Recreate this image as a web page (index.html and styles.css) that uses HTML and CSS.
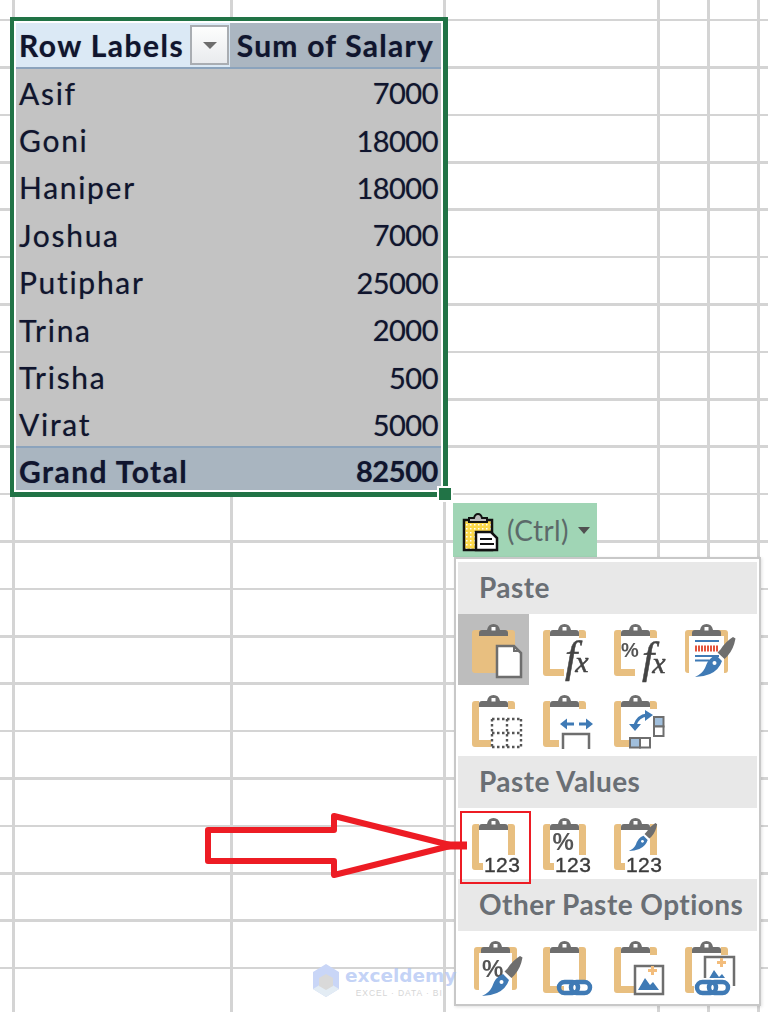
FILE: index.html
```html
<!DOCTYPE html>
<html lang="en">
<head>
<meta charset="utf-8">
<title>Paste Values</title>
<link rel="stylesheet" href="styles.css">
</head>
<body>
<svg class="sprite" width="0" height="0" aria-hidden="true">
  <defs>
    <g id="clip"><path class="gray" d="M21 22v-3q0-3 3-3h5q1-6 6.500-6t6.500 6h5q3 0 3 3v3z"/><rect class="white" x="33.500" y="13" width="4" height="3.500"/></g>
    <path id="left" class="tan" d="M14 19q0-3 3-3h4v39h14v7H17q-3 0-3-3z"/>
    <path id="rshort" class="tan" d="M50 16h4q3 0 3 3v5h-7z"/>
    <path id="rlong" class="tan" d="M50 16h4q3 0 3 3v34h-7z"/>
    <g id="brush"><path class="gray" d="M62 23l2.500 1.500q-2 11-8 17.500l-3 3-7-6.500 3-3q5-8 12.500-12.500z"/><path class="blue" d="M45 41l6 6q-3 9-12 13-7 3-15 3 7-3 10-9 3-10 11-13z"/><circle class="white" cx="43.500" cy="49" r="2"/></g>
    <g id="chain"><rect class="link" x="2" y="2" width="19" height="11" rx="5.500"/><rect class="link" x="14" y="2" width="19" height="11" rx="5.500"/></g>
    <g id="mount"><path class="blue" d="M0 15L7 3l5 7 3-3 6 8z"/><path class="plus" d="M13-9h3v3h3v3h-3v3h-3v-3h-3v-3h3z"/></g>
  </defs>
</svg>

<main class="sheet">
  <section class="pivot">
    <div class="pivot-row pivot-head">
      <div class="cell-label head-label">
        <span>Row Labels</span>
        <span class="filter"><i class="filter-arrow"></i></span>
      </div>
      <div class="cell-sum head-sum">Sum of Salary</div>
    </div>
    <div class="pivot-row"><div class="cell-label">Asif</div><div class="cell-value">7000</div></div>
    <div class="pivot-row"><div class="cell-label">Goni</div><div class="cell-value">18000</div></div>
    <div class="pivot-row"><div class="cell-label">Haniper</div><div class="cell-value">18000</div></div>
    <div class="pivot-row"><div class="cell-label">Joshua</div><div class="cell-value">7000</div></div>
    <div class="pivot-row"><div class="cell-label">Putiphar</div><div class="cell-value">25000</div></div>
    <div class="pivot-row"><div class="cell-label">Trina</div><div class="cell-value">2000</div></div>
    <div class="pivot-row"><div class="cell-label">Trisha</div><div class="cell-value">500</div></div>
    <div class="pivot-row"><div class="cell-label">Virat</div><div class="cell-value">5000</div></div>
    <div class="pivot-row pivot-total"><div class="cell-label">Grand Total</div><div class="cell-value">82500</div></div>
    <span class="handle"></span>
  </section>

  <div class="paste-area">
    <div class="ctrl-button">
      <svg class="ctrl-icon" width="38" height="40" viewBox="0 0 38 40">
        <defs><pattern id="dots" width="4" height="4" patternUnits="userSpaceOnUse"><rect width="4" height="4" fill="#fbd84a"/><rect width="1.500" height="1.500" fill="#fff"/></pattern></defs>
        <path d="M2 8h28v30H2z" fill="url(#dots)" stroke="#111" stroke-width="2.500"/>
        <path d="M7 10V6h5q1-4 4-4t4 4h5v4z" fill="#bbb" stroke="#111" stroke-width="2"/>
        <path d="M14 20h15l6 6v12H14z" fill="#fff" stroke="#111" stroke-width="2.500"/>
        <path d="M18 27h12M18 32h14" stroke="#111" stroke-width="2"/>
      </svg>
      <span class="ctrl-label">(Ctrl)</span>
      <i class="ctrl-caret"></i>
    </div>

    <div class="menu">
      <h3 class="menu-head">Paste</h3>
      <div class="icon-grid">
        <div class="icon-cell is-active">
          <svg class="icon" viewBox="0 0 71 71"><path class="tan" d="M14 19q0-3 3-3h37q3 0 3 3v37q0 3-3 3H17q-3 0-3-3z"/><use href="#clip"/><path class="doc" d="M39 32h17l7 7v24H39z"/><path class="gray" d="M55 33h2v3h4v2h-6z"/></svg>
        </div>
        <div class="icon-cell">
          <svg class="icon" viewBox="0 0 71 71"><use href="#left"/><use href="#rshort"/><use href="#clip"/><text class="t-fx" x="36" y="58">f<tspan dx="-2" class="t-x">x</tspan></text></svg>
        </div>
        <div class="icon-cell">
          <svg class="icon" viewBox="0 0 71 71"><use href="#left"/><use href="#rshort"/><use href="#clip"/><text class="t-pct t-pct-small" x="21" y="43">%</text><text class="t-fx" x="42" y="59">f<tspan dx="-2" class="t-x">x</tspan></text></svg>
        </div>
        <div class="icon-cell">
          <svg class="icon" viewBox="0 0 71 71"><path class="tan" d="M14 19q0-3 3-3h37q3 0 3 3v37q0 3-3 3H17q-3 0-3-3z"/><rect class="white" x="18" y="22" width="35" height="37"/><use href="#clip"/><path class="bluebar" d="M24 27h24M24 42h24M24 46.500h14"/><path class="check" d="M24 34.500h24"/><use href="#brush"/></svg>
        </div>
        <div class="icon-cell">
          <svg class="icon" viewBox="0 0 71 71"><use href="#left"/><use href="#rshort"/><use href="#clip"/><rect class="white" x="33" y="31" width="31" height="32"/><path class="dotted" d="M34 34h30M34 48h30M34 62h30M34 34v29M49 34v29M63 34v29"/></svg>
        </div>
        <div class="icon-cell">
          <svg class="icon" viewBox="0 0 71 71"><use href="#left"/><use href="#rshort"/><use href="#clip"/><rect class="white" x="30" y="30" width="35" height="34"/><path class="arrow-line" d="M36 39h9M50 39h9"/><path class="blue" d="M31 39l7-5.500v11zM64 39l-7-5.500v11z"/><path class="frame" d="M34 64V49h26v15"/></svg>
        </div>
        <div class="icon-cell">
          <svg class="icon" viewBox="0 0 71 71"><use href="#left"/><use href="#rshort"/><use href="#clip"/><rect class="white" x="29" y="28" width="35" height="35"/><path class="arrow-curve" d="M47 30q-9 1-12 10"/><path class="blue" d="M45 25l8 5-8 6zM29 39h12l-6 7z"/><rect class="swatch" x="54" y="32" width="9.500" height="9.500"/><rect class="box" x="54" y="41.500" width="9.500" height="9.500"/><rect class="swatch" x="30" y="53" width="10" height="9.500"/><rect class="box" x="40" y="53" width="10" height="9.500"/></svg>
        </div>
      </div>

      <h3 class="menu-head">Paste Values</h3>
      <div class="icon-grid">
        <div class="icon-cell">
          <svg class="icon" viewBox="0 0 71 71"><use href="#left"/><use href="#rlong"/><use href="#clip"/><rect class="white" x="25" y="47" width="40" height="18"/><text class="t-num" x="26" y="64">123</text></svg>
          <span class="red-box"></span>
        </div>
        <div class="icon-cell">
          <svg class="icon" viewBox="0 0 71 71"><use href="#left"/><use href="#rlong"/><use href="#clip"/><text class="t-pct" x="23.500" y="42">%</text><rect class="white" x="25" y="47" width="40" height="18"/><text class="t-num" x="26" y="64">123</text></svg>
        </div>
        <div class="icon-cell">
          <svg class="icon" viewBox="0 0 71 71"><use href="#left"/><use href="#rshort"/><rect class="tan" x="50" y="16" width="7" height="32"/><use href="#clip"/><use href="#brush" transform="translate(12 -1) scale(.7)"/><rect class="white" x="25" y="47" width="40" height="18"/><text class="t-num" x="26" y="64">123</text></svg>
        </div>
      </div>

      <h3 class="menu-head">Other Paste Options</h3>
      <div class="icon-grid">
        <div class="icon-cell">
          <svg class="icon" viewBox="0 0 71 71"><path class="tan" d="M16 19q0-3 3-3h37q3 0 3 3v37q0 3-3 3H19q-3 0-3-3z"/><rect class="white" x="21" y="22" width="33" height="37"/><use href="#clip" transform="translate(2 0)"/><text class="t-pct" x="24" y="46">%</text><use href="#brush" transform="translate(0 2)"/></svg>
        </div>
        <div class="icon-cell">
          <svg class="icon" viewBox="0 0 71 71"><use href="#left"/><use href="#rlong"/><use href="#clip"/><use href="#chain" transform="translate(28 49)"/></svg>
        </div>
        <div class="icon-cell">
          <svg class="icon" viewBox="0 0 71 71"><use href="#left"/><use href="#rshort"/><use href="#clip"/><rect class="frame-fill" x="35" y="35" width="28" height="28"/><use href="#mount" transform="translate(38 44)"/></svg>
        </div>
        <div class="icon-cell">
          <svg class="icon" viewBox="0 0 71 71"><use href="#left"/><use href="#rshort"/><use href="#clip"/><path class="frame-fill" d="M34 47V26h29v29"/><use href="#mount" transform="translate(36 36)"/><rect class="white" x="23" y="47" width="37" height="18"/><use href="#chain" transform="translate(24 49)"/></svg>
        </div>
      </div>
    </div>
  </div>

  <svg class="big-arrow" width="270" height="80" viewBox="0 0 270 80">
    <path d="M3 18h126V4l118 29.500L129 63V49H3z"/>
    <path class="arrow-stub" d="M240 33.500h22"/>
  </svg>

  <div class="watermark">
    <svg class="wm-logo" width="28" height="34" viewBox="0 0 28 34"><path d="M14 0l13 8v17l-13 8-13-8V8z" fill="#c9d6f7"/><path d="M14 17l13 8-13 8-13-8z" fill="#e3ecf4"/><path d="M14 10l7 4v8l-7 4-7-4v-8z" fill="#d9d9d9"/></svg>
    <div class="wm-text">
      <span class="wm-name">exceldemy</span>
      <span class="wm-sub">EXCEL · DATA · BI</span>
    </div>
  </div>
</main>
</body>
</html>
```
FILE: styles.css
```css
* { box-sizing: border-box; }
html, body { margin: 0; padding: 0; background: #fff; }
.sprite { position: absolute; }

.sheet {
  position: relative;
  width: 768px;
  height: 1012px;
  overflow: hidden;
  padding: 17px 0 0 10px;
  background-color: #fff;
  background-image:
    linear-gradient(#d4d4d4, #d4d4d4),
    linear-gradient(#d4d4d4, #d4d4d4),
    linear-gradient(#d4d4d4, #d4d4d4),
    linear-gradient(#d4d4d4, #d4d4d4),
    linear-gradient(#d4d4d4, #d4d4d4),
    linear-gradient(#d4d4d4, #d4d4d4),
    repeating-linear-gradient(to bottom, transparent 0 18.8px, #d4d4d4 18.8px 21.4px, transparent 21.4px 47.4px);
  background-repeat: no-repeat;
  background-size: 3px 100%, 3px 100%, 3px 100%, 3px 100%, 3px 100%, 3px 100%, 100% 100%;
  background-position: 12px 0, 230px 0, 443px 0, 657px 0, 707px 0, 757px 0, 0 0;
}

/* pivot table */
.pivot {
  position: relative;
  width: 438px;
  height: 480px;
  border: solid #217346;
  border-width: 4px 5px 5px 4px;
  padding: 2px;
  background: #fff;
  display: grid;
  grid-template-rows: 46px repeat(8, 47.4px) 42px;
  font-family: "Lato", "Liberation Sans", sans-serif;
  font-size: 30px;
  color: #10152e;
  text-shadow: 0 0 1px rgba(16, 21, 46, .45);
}
.pivot-row {
  display: grid;
  grid-template-columns: 214px 1fr;
  align-items: center;
  background: #c3c3c3;
}
.cell-label { padding-left: 3px; white-space: nowrap; letter-spacing: 1.700px; }
.cell-value { padding-right: 3px; text-align: right; font-size: 29px; letter-spacing: -.5px; }

.pivot-head {
  align-items: stretch;
  font-weight: 700;
  border-bottom: 2px solid #8ba3bc;
  background: #abb6c1;
}
.head-label {
  display: flex;
  align-items: center;
  justify-content: space-between;
  padding-right: 1px;
  letter-spacing: 1.450px;
  background: #dbe9f5;
}
.head-sum {
  display: flex;
  align-items: center;
  justify-content: flex-end;
  padding-right: 7px;
  letter-spacing: 1.250px;
}
.filter {
  display: flex;
  align-items: center;
  justify-content: center;
  width: 39px;
  height: 40px;
  border: 2px solid #a9adb2;
  background: linear-gradient(#fdfdfd, #e9ebee);
}
.filter-arrow {
  width: 0;
  height: 0;
  border: 7px solid transparent;
  border-top: 7px solid #6d6d6d;
  border-bottom: 0;
}
.pivot-total {
  margin-top: -2px;
  height: 44px;
  padding-top: 3px;
  border-top: 2px solid #8ba3bc;
  background: #a9b5c0;
  font-weight: 700;
}
.pivot-total .cell-label { letter-spacing: 1.450px; }
.pivot-total .cell-value { font-size: 29px; letter-spacing: -.4px; }
.handle {
  position: absolute;
  right: -8px;
  bottom: -8px;
  width: 12px;
  height: 12px;
  background: #217346;
  outline: 2px solid #fff;
}

/* paste button and menu */
.paste-area { margin: 6px 0 0 443px; width: 308px; }
.ctrl-button {
  display: flex;
  align-items: center;
  width: 144px;
  height: 54px;
  padding-left: 9px;
  background: #a0d5b5;
}
.ctrl-icon { flex: none; margin-top: 4px; }
.ctrl-label {
  margin-left: 7px;
  font-family: "Lato", "Liberation Sans", sans-serif;
  font-size: 28px;
  color: #5c6a6a;
  letter-spacing: .4px;
}
.ctrl-caret {
  margin-left: 9px;
  width: 0;
  height: 0;
  border: 6px solid transparent;
  border-top: 7px solid #505050;
  border-bottom: 0;
}
.menu {
  width: 307px;
  height: 449px;
  margin-left: 1px;
  padding: 3px 2px 2px;
  border: 2px solid #c8c8c8;
  background: #fff;
  box-shadow: 1px 1px 3px rgba(0, 0, 0, .12);
}
.menu-head {
  margin: 0;
  height: 52px;
  padding: 0 0 2px 21px;
  display: flex;
  align-items: center;
  background: #e8e8e8;
  font-family: "Lato", "Liberation Sans", sans-serif;
  font-size: 28px;
  font-weight: 700;
  letter-spacing: .45px;
  color: #6a6f75;
}
.icon-grid { display: grid; grid-template-columns: repeat(4, 71px); grid-auto-rows: 71px; }
.icon-cell { position: relative; }
.is-active { background: #bdbdbd; }
.icon { display: block; width: 71px; height: 71px; filter: blur(.35px); }
.red-box {
  position: absolute;
  left: 2px;
  top: 3px;
  width: 71px;
  height: 73px;
  border: 2px solid #ed1c24;
}

/* icon parts */
.tan { fill: #e8bf80; }
.gray { fill: #6e6e6e; }
.white { fill: #fff; }
.blue { fill: #3f7ab5; }
.plus { fill: #f3bd7c; }
.doc { fill: #fff; stroke: #6e6e6e; stroke-width: 2.500; }
.bluebar { fill: none; stroke: #3f7ab5; stroke-width: 2; }
.check { fill: none; stroke: #e2533c; stroke-width: 6; stroke-dasharray: 2 1; }
.dotted { fill: none; stroke: #555; stroke-width: 2.400; stroke-dasharray: 2.500 2.500; }
.arrow-line { fill: none; stroke: #3f7ab5; stroke-width: 3; }
.arrow-curve { fill: none; stroke: #3f7ab5; stroke-width: 3; }
.frame { fill: none; stroke: #6e6e6e; stroke-width: 2.500; }
.frame-fill { fill: #fff; stroke: #6e6e6e; stroke-width: 2.500; }
.swatch { fill: #a1bfdc; stroke: #6e6e6e; stroke-width: 2; }
.box { fill: #fff; stroke: #6e6e6e; stroke-width: 2; }
.link { fill: none; stroke: #3f7ab5; stroke-width: 4.500; }
.t-fx { font-family: "Liberation Serif", serif; font-style: italic; font-size: 44px; fill: #444; stroke: #444; stroke-width: .5; }
.t-x { font-size: 30px; }
.t-pct { font-family: "Liberation Sans", sans-serif; font-weight: 700; font-size: 24px; fill: #555; }
.t-pct-small { font-size: 20px; }
.t-num { font-family: "Liberation Sans", sans-serif; font-size: 21px; fill: #3c3c3c; stroke: #3c3c3c; stroke-width: .4; letter-spacing: .4px; }

/* overlays */
.big-arrow { position: absolute; left: 205px; top: 812px; }
.big-arrow path { fill: none; stroke: #ed1c24; stroke-width: 6; stroke-linejoin: round; }
.big-arrow .arrow-stub { stroke-width: 8; }
.watermark {
  position: absolute;
  left: 312px;
  top: 964px;
  display: flex;
  gap: 5px;
  pointer-events: none;
}
.wm-text { display: flex; flex-direction: column; align-items: center; }
.wm-name {
  font-family: "DejaVu Sans", sans-serif;
  font-weight: 700;
  font-size: 18.500px;
  line-height: 24px;
  color: rgba(170, 192, 243, .7);
}
.wm-sub {
  padding-right: 3px;
  font-family: "Liberation Sans", sans-serif;
  font-size: 8.500px;
  line-height: 10px;
  letter-spacing: .9px;
  color: #d6d6d6;
}
```
